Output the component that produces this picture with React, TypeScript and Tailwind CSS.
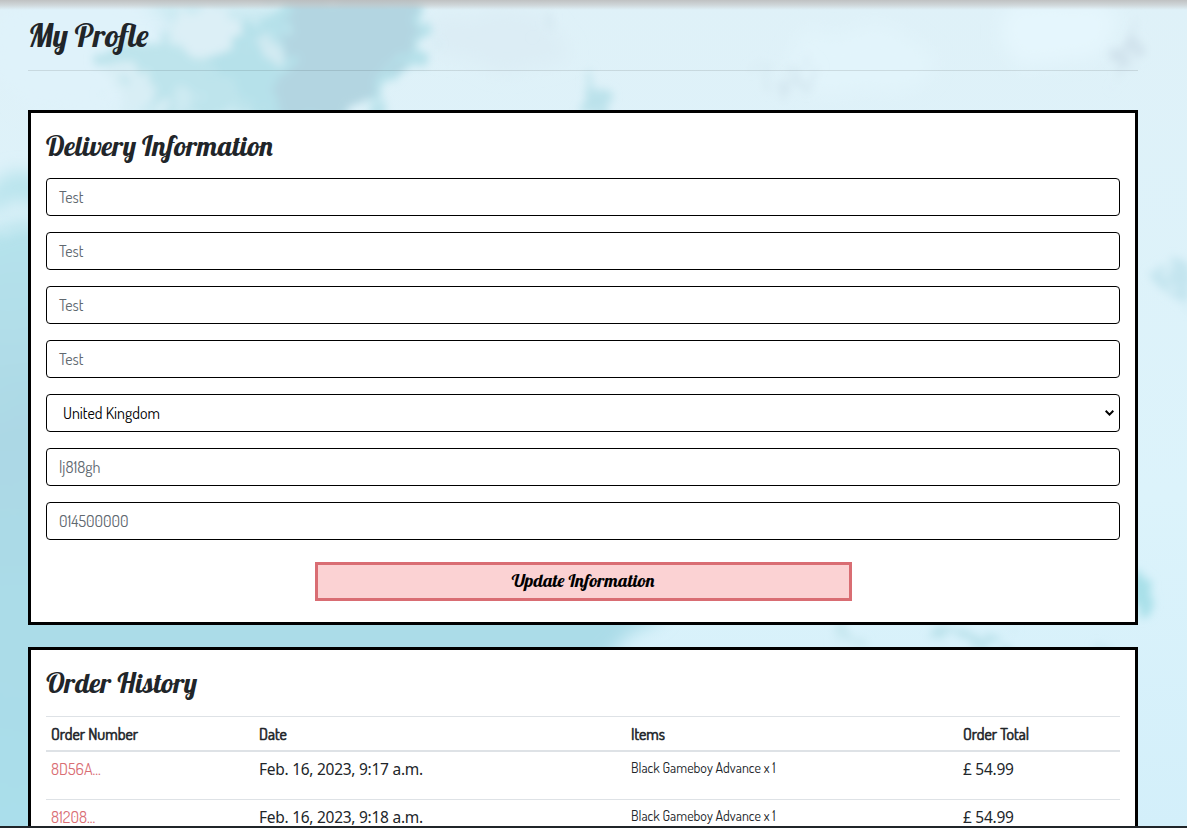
import type { ReactNode } from "react";

const script = "font-['Lobster','Liberation_Serif',serif] font-medium";
const sans = "font-['Dosis','Roboto',sans-serif]";

function Sky() {
  return (
    <svg className="absolute inset-0 h-full w-full" viewBox="0 0 1187 828" preserveAspectRatio="none" aria-hidden="true">
      <defs>
        <filter id="ragged" x="-20%" y="-20%" width="140%" height="140%">
          <feTurbulence type="fractalNoise" baseFrequency="0.04" numOctaves="5" seed="8" result="n" />
          <feDisplacementMap in="SourceGraphic" in2="n" scale="60" xChannelSelector="R" yChannelSelector="G" />
          <feGaussianBlur stdDeviation="4" />
        </filter>
        <filter id="soft" x="-30%" y="-30%" width="160%" height="160%">
          <feTurbulence type="fractalNoise" baseFrequency="0.02" numOctaves="3" seed="3" result="n" />
          <feDisplacementMap in="SourceGraphic" in2="n" scale="40" xChannelSelector="R" yChannelSelector="G" />
          <feGaussianBlur stdDeviation="9" />
        </filter>
        <linearGradient id="left" x1="0" y1="0" x2="0" y2="1">
          <stop offset="0" stopColor="#b6e3ec" />
          <stop offset="0.3" stopColor="#acd8e5" />
          <stop offset="1" stopColor="#a9e0ec" />
        </linearGradient>
        <linearGradient id="right" x1="0" y1="0" x2="0" y2="1">
          <stop offset="0" stopColor="#dff1f8" />
          <stop offset="0.6" stopColor="#dcf3fb" />
          <stop offset="1" stopColor="#d3effa" />
        </linearGradient>
      </defs>
      <rect width="1187" height="828" fill="url(#right)" />
      <g filter="url(#soft)">
        <ellipse cx="190" cy="60" rx="150" ry="60" fill="#c9e9f1" />
        <ellipse cx="80" cy="50" rx="95" ry="65" fill="#dff2fa" />
        <ellipse cx="500" cy="40" rx="60" ry="30" fill="#dcedf5" />
        <ellipse cx="860" cy="60" rx="80" ry="30" fill="#e2f4fb" />
        <ellipse cx="1060" cy="30" rx="60" ry="30" fill="#e5f6fd" />
        <rect x="-80" y="225" width="340" height="700" fill="url(#left)" />
        <path d="M-80 580 H680 L625 635 L580 690 H-80Z" fill="#abdce8" />
        <ellipse cx="12" cy="195" rx="28" ry="15" fill="#b9e4ed" />
      </g>
      <g filter="url(#ragged)">
        <path d="M280 -10 L400 -5 Q445 20 412 60 L375 105 L345 125 L262 120 L215 75 L235 30Z" fill="#b6e1ea" />
        <path d="M290 -10 H392 Q428 30 398 60 L360 115 H280 L285 70Z" fill="#b3d5e1" />
        <path d="M115 40 Q180 35 220 75 L255 110 L195 120 L145 92 L105 65Z" fill="#bee4ec" />
        <path d="M165 -5 Q215 10 245 15 L225 55 L200 72 L175 40Z" fill="#dceff6" />
        <ellipse cx="266" cy="52" rx="15" ry="12" fill="#d2eaf2" />
        <ellipse cx="134" cy="88" rx="28" ry="15" fill="#d8eef5" />
        <ellipse cx="190" cy="104" rx="14" ry="8" fill="#cdeaf2" />
        <path d="M588 68 Q602 88 608 122 H590Z" fill="#bbe2eb" />
        <path d="M812 50 L796 78 L784 100 L800 90Z" fill="#d3e6ef" />
        <path d="M766 60 L770 86 L758 74Z" fill="#d6e9f1" />
        <ellipse cx="548" cy="20" rx="9" ry="12" fill="#d5e8f1" />
        <path d="M1145 268 L1187 272 V302 L1160 290Z" fill="#c4e5ef" />
        <ellipse cx="1144" cy="594" rx="11" ry="20" fill="#a9e0e9" />
        <ellipse cx="970" cy="640" rx="32" ry="8" fill="#b9e1ea" />
        <ellipse cx="850" cy="638" rx="12" ry="6" fill="#c5e6ee" />
        <ellipse cx="1104" cy="642" rx="14" ry="7" fill="#c2e5ee" />
        <ellipse cx="10" cy="230" rx="26" ry="4" fill="#c8e9f2" />
      </g>
      <g filter="url(#ragged)">
        <path d="M1146 24 L1122 42 L1106 68 L1116 96 L1120 62Z" fill="#d0e2ec" />
      </g>
    </svg>
  );
}

function Field({ children }: { children: ReactNode }) {
  return (
    <div className={`${sans} flex h-[38px] items-center rounded-[4px] border border-black bg-white px-3 text-base font-normal text-[#60686f]`}>
      {children}
    </div>
  );
}

const orders = [
  { id: "8D56A...", date: "Feb. 16, 2023, 9:17 a.m." },
  { id: "81208...", date: "Feb. 16, 2023, 9:18 a.m." },
];

const columns = "grid grid-cols-[208px_372px_332px_1fr] px-[5px]";

export default function App() {
  return (
    <div className="relative flex h-[828px] w-full flex-col overflow-hidden">
      <Sky />
      <div className="absolute inset-x-0 top-0 h-[10px] bg-linear-to-b from-[#bcbcbc]/90 via-[#c4c4c4]/60 to-[#d0d0d0]/0" />
      <main className="relative ml-7 flex min-h-0 w-[1110px] flex-1 flex-col overflow-hidden">
        <header className="flex h-[71px] shrink-0 items-start border-b border-black/10 pt-4">
          <h1 className={`${script} text-[32px] leading-[38px] text-[#212529]`}>My Profle</h1>
        </header>

        <section className="mt-[39px] h-[515px] shrink-0 border-[3px] border-black bg-white px-[15px] pt-4">
          <h2 className={`${script} h-[49px] text-[28px] leading-[34px] text-[#212529]`}>Delivery Information</h2>
          <form className="flex flex-col gap-4">
            <Field>Test</Field>
            <Field>Test</Field>
            <Field>Test</Field>
            <Field>Test</Field>
            <div className={`${sans} flex h-[38px] items-center justify-between rounded-[4px] border border-black bg-white pl-4 pr-[5px] text-base text-black`}>
              <span>United Kingdom</span>
              <svg className="h-[6px] w-[9px]" viewBox="0 0 9 6" fill="none" stroke="black" strokeWidth="2">
                <path d="M0.7 0.8 L4.5 4.6 L8.3 0.8" />
              </svg>
            </div>
            <Field>lj818gh</Field>
            <Field>014500000</Field>
            <button type="button" className={`${script} mt-[6px] h-[39px] w-[537px] self-center border-[3px] border-[#d96d73] bg-[#fbd2d3] pb-[2px] text-[18.4px] text-black`}>
              Update Information
            </button>
          </form>
        </section>

        <section className="mt-[22px] h-[300px] shrink-0 border-[3px] border-black bg-white px-[15px] pt-4 text-[#212529]">
          <h2 className={`${script} h-[50px] text-[28px] leading-[34px]`}>Order History</h2>
          <div className={`${columns} ${sans} h-[36px] items-center border-t border-b-2 border-[#dee2e6] text-base font-normal [-webkit-text-stroke:0.6px_#212529]`}>
            <span>Order Number</span>
            <span>Date</span>
            <span>Items</span>
            <span>Order Total</span>
          </div>
          {orders.map((o) => (
            <div key={o.id} className={`${columns} h-12 items-start border-b border-[#dee2e6] pt-[5px] font-['Noto_Sans',sans-serif] text-[15.5px] leading-6 tracking-[-0.27px]`}>
              <a className={`${sans} text-base leading-6 tracking-normal text-[#d96d73]`}>{o.id}</a>
              <span>{o.date}</span>
              <span className={`${sans} text-[14px] leading-[22px] tracking-normal`}>Black Gameboy Advance x 1</span>
              <span>£ 54.99</span>
            </div>
          ))}
        </section>
      </main>
      <footer className="relative h-[2px] shrink-0 bg-[#202529]" />
    </div>
  );
}
